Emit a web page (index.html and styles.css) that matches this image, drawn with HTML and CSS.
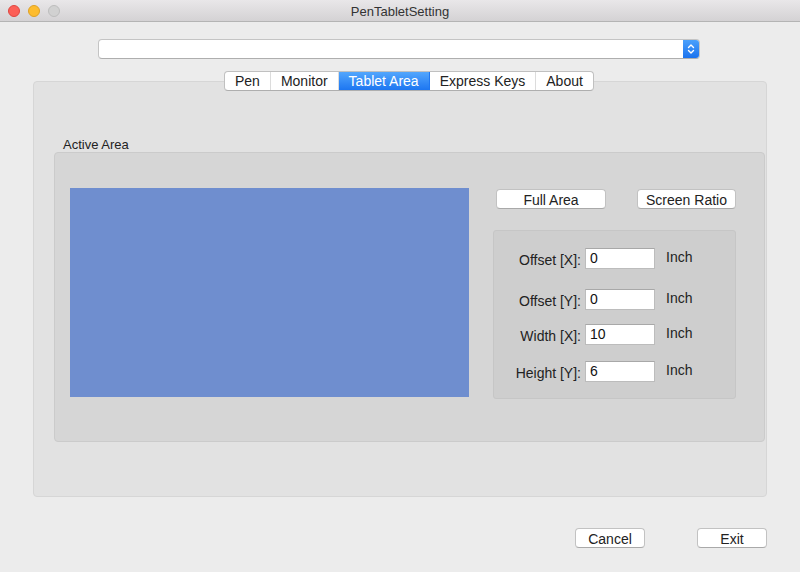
FILE: index.html
```html
<!DOCTYPE html>
<html>
<head>
<meta charset="utf-8">
<title>PenTabletSetting</title>
<link rel="stylesheet" href="styles.css">
</head>
<body>
<div class="window">
  <div class="titlebar">
    <div class="lights">
      <span class="light red"></span>
      <span class="light yellow"></span>
      <span class="light gray"></span>
    </div>
    <div class="title">PenTabletSetting</div>
  </div>

  <div class="combo">
    <div class="combo-field"></div>
    <div class="combo-arrow">
      <svg width="8" height="12" viewBox="0 0 8 12"><path d="M1.5 4.5 L4 2 L6.5 4.5 M1.5 7.5 L4 10 L6.5 7.5" fill="none" stroke="#fff" stroke-width="1.4" stroke-linecap="round" stroke-linejoin="round"/></svg>
    </div>
  </div>

  <div class="tabs">
    <div class="tab">Pen</div>
    <div class="tab">Monitor</div>
    <div class="tab active">Tablet Area</div>
    <div class="tab">Express Keys</div>
    <div class="tab last">About</div>
  </div>

  <div class="pane">
    <div class="group-label">Active Area</div>
    <div class="group">
      <div class="area"></div>
      <div class="side">
        <div class="btn-row">
          <button class="btn full">Full Area</button>
          <button class="btn ratio">Screen Ratio</button>
        </div>
        <div class="fields">
          <div class="row r1"><span class="lbl">Offset [X]:</span><span class="input">0</span><span class="unit">Inch</span></div>
          <div class="row r2"><span class="lbl">Offset [Y]:</span><span class="input">0</span><span class="unit">Inch</span></div>
          <div class="row r3"><span class="lbl">Width [X]:</span><span class="input">10</span><span class="unit">Inch</span></div>
          <div class="row r4"><span class="lbl">Height [Y]:</span><span class="input">6</span><span class="unit">Inch</span></div>
        </div>
      </div>
    </div>
  </div>

  <div class="footer">
    <button class="btn foot">Cancel</button>
    <button class="btn foot">Exit</button>
  </div>
</div>
</body>
</html>
```

FILE: styles.css
```css
* { box-sizing: border-box; }
html, body { margin: 0; padding: 0; }
body {
  font-family: "Liberation Sans", Arial, sans-serif;
  font-size: 14px;
  color: #1e1e1e;
  background: #ececec;
}
.window {
  width: 800px;
  height: 572px;
  background: #ececec;
  overflow: hidden;
}
.titlebar {
  height: 22px;
  background: linear-gradient(#e9e7e9, #d4d2d4);
  border-bottom: 1px solid #b4b4b4;
  display: flex;
  align-items: center;
}
.lights {
  display: flex;
  gap: 8px;
  padding-left: 8px;
}
.light {
  width: 12px;
  height: 12px;
  border-radius: 50%;
  display: block;
}
.light.red { background: #fc5f57; border: 1px solid #df4640; }
.light.yellow { background: #fdbc2e; border: 1px solid #dea124; }
.light.gray { background: #d1d1d1; border: 1px solid #bdbdbd; }
.title {
  flex: 1;
  text-align: center;
  margin-right: 60px;
  padding-top: 1px;
  color: #333;
  font-size: 13px;
}
.combo {
  margin: 17px 0 0 98px;
  width: 602px;
  height: 20px;
  display: flex;
  border: 1px solid #c4c4c4;
  border-bottom-color: #aeaeae;
  border-radius: 4px;
  background: #fff;
  overflow: hidden;
}
.combo-field { flex: 1; }
.combo-arrow {
  width: 16px;
  background: linear-gradient(#4aa0fb, #1b73ee);
  display: flex;
  align-items: center;
  justify-content: center;
}
.tabs {
  margin: 12px 0 0 224px;
  display: inline-flex;
  height: 20px;
  border: 1px solid #c0c0c0;
  border-bottom-color: #aeaeae;
  border-radius: 4px;
  background: #fff;
  overflow: hidden;
  position: relative;
  z-index: 1;
}
.tab {
  padding: 1px 10px 0 10px;
  line-height: 17px;
  border-right: 1px solid #dcdcdc;
  color: #222;
}
.tab.last { border-right: none; }
.tab.active {
  background: linear-gradient(#52a6fd, #1d76f1);
  color: #fff;
  border-right-color: #1d76f1;
}
.pane {
  margin: -10px 0 0 33px;
  width: 734px;
  height: 416px;
  background: #e2e2e2;
  border: 1px solid #d6d6d6;
  border-radius: 4px;
  padding: 54px 0 0 20px;
}
.group-label {
  padding-left: 9px;
  padding-top: 1px;
  line-height: 15px;
  font-size: 13px;
  color: #222;
}
.group {
  width: 711px;
  height: 290px;
  background: #d6d6d6;
  border: 1px solid #cbcbcb;
  border-radius: 4px;
  display: flex;
  padding: 35px 0 0 15px;
}
.area {
  width: 399px;
  height: 209px;
  background: #6f8ecf;
}
.side {
  margin-left: 24px;
  display: flex;
  flex-direction: column;
}
.btn-row {
  display: flex;
  margin-top: 1px;
}
.btn {
  font-family: inherit;
  font-size: 14px;
  color: #222;
  height: 20px;
  padding: 2px 0 0;
  background: #fff;
  border: 1px solid #c2c2c2;
  border-bottom-color: #a9a9a9;
  border-radius: 4px;
  line-height: 16px;
  text-align: center;
}
.btn.full { width: 110px; margin-left: 3px; }
.btn.ratio { width: 99px; margin-left: 31px; }
.fields {
  margin-top: 21px;
  width: 243px;
  height: 169px;
  background: #cecece;
  border: 1px solid #c6c6c6;
  border-radius: 3px;
  padding-top: 17px;
  display: flex;
  flex-direction: column;
}
.row {
  display: flex;
  align-items: center;
  height: 21px;
}
.r2 { margin-top: 20px; }
.r3 { margin-top: 14px; }
.r4 { margin-top: 16px; }
.lbl {
  width: 87px;
  text-align: right;
  padding-top: 3px;
  color: #222;
}
.input {
  margin-left: 4px;
  width: 70px;
  height: 21px;
  background: #fff;
  border: 1px solid #bcbcbc;
  border-top-color: #a8a8a8;
  padding-left: 4px;
  line-height: 19px;
  color: #111;
}
.unit {
  margin-left: 11px;
  margin-top: -3px;
  color: #222;
}
.footer {
  margin-top: 31px;
  display: flex;
  justify-content: flex-end;
  padding-right: 33px;
  gap: 52px;
}
.btn.foot { width: 70px; }
```
